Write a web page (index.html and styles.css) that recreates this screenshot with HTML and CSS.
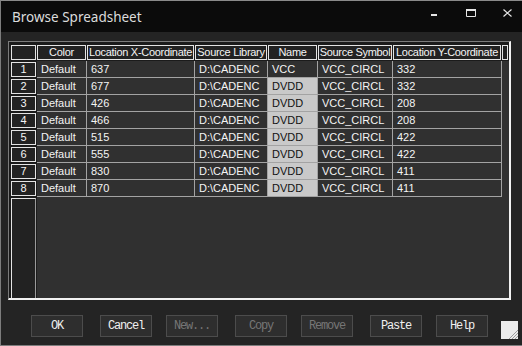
FILE: index.html
```html
<!DOCTYPE html>
<html lang="en">
<head>
    <meta charset="UTF-8">
    <title>Browse Spreadsheet</title>
    <link rel="stylesheet" href="styles.css">
</head>
<body>
    <div class="window">
        <div class="titlebar">
            <span class="title">Browse Spreadsheet</span>
            <div class="controls">
                <svg class="ctl-min" width="6" height="2" viewBox="0 0 6 2"><rect width="6" height="2" fill="#e6e6e6"/></svg>
                <svg class="ctl-max" width="10" height="8" viewBox="0 0 10 8"><path d="M0.5 1.5H9.5V7.5H0.5Z" fill="none" stroke="#e6e6e6"/><rect x="0" y="0" width="10" height="2" fill="#e6e6e6"/></svg>
                <svg class="ctl-close" width="9" height="8" viewBox="0 0 9 8"><path d="M0.5 0.5L8.5 7.5M8.5 0.5L0.5 7.5" stroke="#e6e6e6" stroke-width="1.2"/></svg>
            </div>
        </div>

        <div class="frame">
            <table class="sheet">
                <thead>
                    <tr>
                        <th class="rowhead"><div></div></th>
                        <th class="c-color"><div>Color</div></th>
                        <th class="c-locx"><div>Location X-Coordinate</div></th>
                        <th class="c-lib"><div>Source Library</div></th>
                        <th class="c-name"><div>Name</div></th>
                        <th class="c-sym"><div>Source Symbol</div></th>
                        <th class="c-locy"><div>Location Y-Coordinate</div></th>
                        <th class="c-pad"><div></div></th>
                    </tr>
                </thead>
                <tbody>
                    <tr><th class="rowhead"><div>1</div></th><td>Default</td><td>637</td><td>D:\CADENC</td><td>VCC</td><td>VCC_CIRCL</td><td>332</td><td class="pad"></td></tr>
                    <tr><th class="rowhead"><div>2</div></th><td>Default</td><td>677</td><td>D:\CADENC</td><td class="hl">DVDD</td><td>VCC_CIRCL</td><td>332</td><td class="pad"></td></tr>
                    <tr><th class="rowhead"><div>3</div></th><td>Default</td><td>426</td><td>D:\CADENC</td><td class="hl">DVDD</td><td>VCC_CIRCL</td><td>208</td><td class="pad"></td></tr>
                    <tr><th class="rowhead"><div>4</div></th><td>Default</td><td>466</td><td>D:\CADENC</td><td class="hl">DVDD</td><td>VCC_CIRCL</td><td>208</td><td class="pad"></td></tr>
                    <tr><th class="rowhead"><div>5</div></th><td>Default</td><td>515</td><td>D:\CADENC</td><td class="hl">DVDD</td><td>VCC_CIRCL</td><td>422</td><td class="pad"></td></tr>
                    <tr><th class="rowhead"><div>6</div></th><td>Default</td><td>555</td><td>D:\CADENC</td><td class="hl">DVDD</td><td>VCC_CIRCL</td><td>422</td><td class="pad"></td></tr>
                    <tr><th class="rowhead"><div>7</div></th><td>Default</td><td>830</td><td>D:\CADENC</td><td class="hl">DVDD</td><td>VCC_CIRCL</td><td>411</td><td class="pad"></td></tr>
                    <tr><th class="rowhead"><div>8</div></th><td>Default</td><td>870</td><td>D:\CADENC</td><td class="hl">DVDD</td><td>VCC_CIRCL</td><td>411</td><td class="pad"></td></tr>
                    <tr class="blank"><th class="rowhead"><div></div></th><td colspan="7"></td></tr>
                </tbody>
            </table>
        </div>

        <div class="actions">
            <button>OK</button>
            <button>Cancel</button>
            <button disabled>New...</button>
            <button disabled>Copy</button>
            <button disabled>Remove</button>
            <button>Paste</button>
            <button>Help</button>
            <svg class="grip" width="17" height="18" viewBox="0 0 17 18">
                <rect width="17" height="18" fill="#ebebeb"/>
                <path d="M17 9L8 18M17 12L11 18M17 15L14 18" stroke="#9c9c9c" stroke-width="1"/>
            </svg>
        </div>
    </div>
</body>
</html>
```

FILE: styles.css
```css
html, body {
    margin: 0;
    padding: 0;
    background-color: #242424;
}
body {
    font-family: "Liberation Sans", Arial, sans-serif;
    width: 522px;
    height: 346px;
    overflow: hidden;
}
.window {
    width: 521px;
    height: 344px;
    border-left: 1px solid #7d7d7d;
    border-top: 1px solid #8a8a8a;
    border-bottom: 1px solid #7d7d7d;
    background-color: #242424;
    overflow: hidden;
}

/* title bar */
.titlebar {
    height: 31px;
    background-color: #0b0b0b;
    display: flex;
    justify-content: space-between;
}
.title {
    font-family: "Noto Sans", sans-serif;
    font-size: 13.5px;
    line-height: 18px;
    color: #dcdcdc;
    margin: 7px 0 0 11px;
}
.controls {
    display: flex;
    align-items: flex-start;
    margin-right: 10px;
}
.controls svg {
    display: block;
}
.ctl-min {
    margin-top: 13px;
}
.ctl-max {
    margin: 8px 0 0 29px;
}
.ctl-close {
    margin: 8px 0 0 27px;
}

/* spreadsheet grid */
.frame {
    width: 499px;
    margin: 9px 0 0 7px;
    padding: 2px 0 0 1px;
    border-top: 1px solid #7c7c7c;
    border-left: 1px solid #7c7c7c;
    border-right: 2px solid #f2f2f2;
    border-bottom: 2px solid #f2f2f2;
    background-color: #1b1b1b;
}
.sheet {
    width: 499px;
    table-layout: fixed;
    border-collapse: separate;
    border-spacing: 0;
    font-size: 11px;
    color: #f4f4f4;
}
.sheet th {
    box-sizing: border-box;
    padding: 1px 1px 1px 0;
    background-color: #1b1b1b;
    font-weight: normal;
}
.sheet th div {
    box-sizing: border-box;
    height: 15px;
    line-height: 13px;
    border: 1px solid #e4e4e4;
    background-color: #222;
    text-align: center;
    letter-spacing: -0.3px;
    white-space: nowrap;
    overflow: hidden;
}
.sheet th.rowhead {
    width: 27px;
    padding: 1px;
}
.c-color { width: 50px; }
.c-locx { width: 108px; }
.c-lib { width: 73px; }
.c-name { width: 50px; }
.c-sym { width: 75px; }
.c-locy { width: 109px; }
.c-pad { width: 7px; }

.sheet td {
    box-sizing: border-box;
    height: 17px;
    padding: 0 0 0 4px;
    line-height: 16px;
    background-color: #303030;
    border-right: 1px solid #a3a3a3;
    border-bottom: 1px solid #a3a3a3;
    white-space: nowrap;
    overflow: hidden;
}
.sheet td.hl {
    background-color: #c9c9c9;
    color: #111;
}
.sheet td.pad {
    border: none;
    padding: 0;
}
.blank th.rowhead {
    padding: 1px 1px 0 1px;
}
.blank th.rowhead div {
    height: 100px;
    border-bottom: none;
    border-right-color: #9a9a9a;
}
.blank td {
    height: 101px;
    border: none;
}

/* buttons */
.actions {
    display: flex;
    align-items: flex-start;
    padding: 15px 0 0 30px;
}
button {
    box-sizing: border-box;
    width: 52px;
    height: 22px;
    padding: 0;
    border: 1px solid #4c4c4c;
    background-color: #2e2e2e;
    color: #f0f0f0;
    font-family: "Liberation Mono", "Courier New", monospace;
    font-size: 12px;
    letter-spacing: -1.2px;
    line-height: 20px;
}
button:nth-child(even) {
    margin-left: 17px;
}
button:nth-child(odd) {
    margin-left: 14px;
}
button:first-child {
    margin-left: 0;
}
button:disabled {
    color: #767676;
}
.grip {
    display: block;
    margin: 6px 0 0 13px;
}
```
